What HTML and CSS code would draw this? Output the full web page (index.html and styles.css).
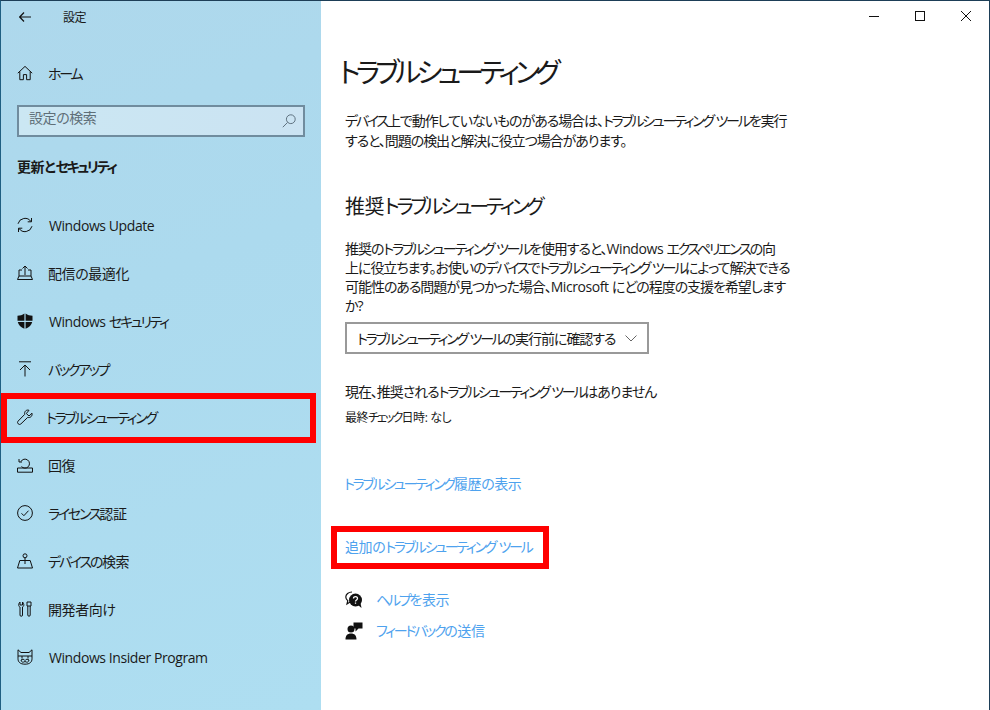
FILE: index.html
```html
<!DOCTYPE html>
<html lang="ja">
<head>
<meta charset="utf-8">
<title>設定</title>
<link rel="stylesheet" href="styles.css">
</head>
<body>
<div class="window">
  <aside class="sidebar">
    <div class="titlebar">
      <svg class="back" width="12" height="10" viewBox="0 0 12 10"><path d="M5 .5.700 5 5 9.500M.7 5H12"/></svg>
      <span class="app-title">設定</span>
    </div>
    <div class="home nav-row">
      <svg class="ico" viewBox="0 0 16 16"><path d="M.8 8.200 8 1.400l7.200 6.800M2.800 6.500v8.200h3.600V9.600h3.200v5.100h3.600V6.500"/></svg>
      <span><b class="k">ホーム</b></span>
    </div>
    <div class="search">
      <span>設定の検索</span>
      <svg width="14" height="14" viewBox="0 0 14 14"><circle cx="8.800" cy="5.200" r="4.400"/><path d="M5.600 8.400.8 13.200"/></svg>
    </div>
    <h2 class="section">更新と<b class="k">セキュリティ</b></h2>
    <nav class="nav">
      <div class="nav-row"><svg class="ico" viewBox="0 0 16 16"><path d="M1 6.800A7.200 7.200 0 0 1 14 4.600M15 9.200A7.200 7.200 0 0 1 2 11.400M14.500 1v3.800h-3.800M1.500 15v-3.800h3.800"/></svg><span class="lat">Windows Update</span></div>
      <div class="nav-row"><svg class="ico" viewBox="0 0 16 16"><path d="M2 11V5h3M11 5h3v6M.5 14.500h15L14 11H2ZM8 10V1M5.500 3.500 8 1l2.500 2.500"/></svg><span>配信の最適化</span></div>
      <div class="nav-row"><svg class="ico solid" viewBox="0 0 16 16"><path d="M7.400.4C5.500 1.800 3 2.600.5 2.700v5.100H7.400ZM8.600.4c1.900 1.400 4.400 2.200 6.900 2.300v5.100H8.600ZM.8 9c.6 3 3 5.300 6.600 6.800V9ZM15.200 9c-.6 3-3 5.300-6.600 6.800V9Z"/></svg><span class="lat">Windows <b class="k">セキュリティ</b></span></div>
      <div class="nav-row"><svg class="ico" viewBox="0 0 16 16"><path d="M2 .8h12M8 15.500V4M3 9l5-5 5 5"/></svg><span><b class="k">バックアップ</b></span></div>
      <div class="nav-row active"><svg class="ico" viewBox="0 0 16 16"><path d="M15 4.200 12 7 9.300 4.500 12 1.300C9.500.3 7 2.500 7.700 5.400L1 12.200A2 2 0 0 0 3.800 15l6.900-6.600c2.800.8 4.900-1.500 4.300-4.200Z"/></svg><span><b class="k">トラブルシューティング</b></span></div>
      <div class="nav-row"><svg class="ico" viewBox="0 0 16 16"><path d="M.5 11v4.200h15V11H.5M4.500 9.500A4.500 4.500 0 1 0 4 4.500M2 2v3h3"/></svg><span>回復</span></div>
      <div class="nav-row"><svg class="ico" viewBox="0 0 16 16"><circle cx="8" cy="8" r="7.400"/><path d="m4.500 8.300 2.400 2.400 4.600-5"/></svg><span><b class="k">ライセンス</b>認証</span></div>
      <div class="nav-row"><svg class="ico" viewBox="0 0 16 16"><circle cx="8" cy="2.800" r="2"/><path d="M8 4.800V11M2.800 7.500h10.400L15.500 15H.5Z"/></svg><span><b class="k">デバイス</b><i class="h">の</i>検索</span></div>
      <div class="nav-row"><svg class="ico" viewBox="0 0 16 16"><path d="M3 1v3h2.500V1C7.500 3 7 5.500 5.500 6v8A1.200 1.200 0 0 1 3 14V6C1.500 5.500 1 3 3 1ZM10 1h4v4h-4ZM10.800 5v9a1.200 1.200 0 0 0 2.400 0V5"/></svg><span>開発者向<i class="h">け</i></span></div>
      <div class="nav-row"><svg class="ico" viewBox="0 0 16 16"><path d="M1 .8 4 3.500h8L15 .8v9c0 3-2 5.400-7 5.400s-7-2.400-7-5.400ZM1 7h14M5 7v2.500M11 7v2.500M4 11c1.500-1 3-1 4 .5 1-1.500 2.500-1.500 4-.5-.3 2.200-2 2.800-4 1.500-2 1.300-3.700.7-4-1.500Z"/></svg><span class="lat">Windows Insider Program</span></div>
    </nav>
    <div class="mark mark-nav"></div>
  </aside>
  <main class="main">
    <div class="caption">
      <svg width="10" height="10" viewBox="0 0 10 10" class="cap-min"><path d="M0 5.500h10"/></svg>
      <svg width="10" height="10" viewBox="0 0 10 10" class="cap-max"><rect x=".5" y=".5" width="9" height="9"/></svg>
      <svg width="10" height="10" viewBox="0 0 10 10" class="cap-close"><path d="M0 0l10 10M10 0 0 10"/></svg>
    </div>
    <h1 class="title"><b class="k">トラブルシューティング</b></h1>
    <p class="intro tight">
      <span class="line"><b class="k">デバイス</b>上で動作していないものがある場合は、<b class="k">トラブルシューティング</b> <b class="k">ツール</b>を実行</span>
      <span class="line">すると、問題の検出と解決に役立つ場合があります。</span>
    </p>
    <h2 class="subtitle">推奨<b class="k">トラブルシューティング</b></h2>
    <p class="desc tight">
      <span class="line">推奨の<b class="k">トラブルシューティング</b> <b class="k">ツール</b>を使用すると、<em class="en">Windows </em><b class="k">エクスペリエンス</b>の向</span>
      <span class="line">上に役立ちます。お使いの<b class="k">デバイス</b>で<b class="k">トラブルシューティング</b> <b class="k">ツール</b>によって解決できる</span>
      <span class="line">可能性のある問題が見つかった場合、<em class="en">Microsoft </em>にどの程度の支援を希望します</span>
      <span class="line">か?</span>
    </p>
    <div class="select tight">
      <span><b class="k">トラブルシューティング</b> <b class="k">ツール</b>の実行前に確認する</span>
      <svg width="12" height="7" viewBox="0 0 12 7"><path d="M.5.500 6 6 11.500.500"/></svg>
    </div>
    <p class="status tight">現在、推奨される<b class="k">トラブルシューティング</b> <b class="k">ツール</b>はありません</p>
    <p class="last">最終<b class="k">チェック</b>日時: なし</p>
    <a class="link history"><b class="k">トラブルシューティング</b>履歴の表示</a>
    <a class="link extra">追加の<b class="k">トラブルシューティング</b> <b class="k">ツール</b></a>
    <div class="help-row help">
      <svg width="18" height="18" viewBox="0 0 18 18"><path class="outline" d="M7 1C3.500 1 .8 3.200.8 6c0 1.500.8 2.800 2 3.700L2 13l3.500-2.200"/><circle cx="10.500" cy="9" r="6.500" class="fill"/><path class="q" d="M8.500 7.500c0-2.500 4-2.500 4 0 0 1.500-2 1.500-2 3M10.500 11.500v1.300"/><path class="fill" d="m13 14 3.500 3-1-5Z"/></svg>
      <a class="link"><b class="k">ヘルプ</b>を表示</a>
    </div>
    <div class="help-row feedback">
      <svg width="18" height="18" viewBox="0 0 18 18"><circle cx="6" cy="7" r="3.500" class="fill"/><path class="fill" d="M.5 17.500c0-4 2-6 5.500-6s5.500 2 5.500 6ZM8.500.5h9v6h-4l-3 3v-3h-2Z"/></svg>
      <a class="link"><b class="k">フィードバック</b>の送信</a>
    </div>
    <div class="mark mark-main"></div>
  </main>
</div>
</body>
</html>
```
FILE: styles.css
```css
* { box-sizing: border-box; }
html, body { margin: 0; height: 100%; }
body {
  width: 990px;
  height: 710px;
  overflow: hidden;
  font-family: "Open Sans", "Noto Sans CJK JP", sans-serif;
  font-size: 14px;
  font-feature-settings: "palt";
  letter-spacing: -0.03em;
  color: #1a1a1a;
  background: #fff;
}
b.k { font-weight: inherit; letter-spacing: -0.16em; }
i.h { font-style: normal; letter-spacing: -0.1em; }
em.en { font-style: normal; letter-spacing: -0.03em; }
.tight { letter-spacing: -0.075em; }
.line { display: block; white-space: nowrap; }
.window {
  position: relative;
  display: flex;
  width: 990px;
  height: 710px;
  border-top: 1px solid #1d3e57;
  border-left: 1px solid #1f5f82;
  border-right: 1px solid #1d3e57;
}
svg { display: block; flex: none; fill: none; stroke: #111; stroke-width: 1; }

.sidebar {
  position: relative;
  width: 320px;
  flex: none;
  background: linear-gradient(160deg, #aed8ec 0%, #acdaee 40%, #aedef1 100%);
}
.titlebar { display: flex; align-items: center; height: 32px; padding-left: 18px; }
.back { stroke-width: 1.2; }
.app-title { margin-left: 32px; font-size: 12px; }
.nav-row { display: flex; align-items: center; height: 48px; padding-left: 16px; }
.nav-row span { margin-left: 15px; white-space: nowrap; }
.nav-row .lat { margin-left: 16px; }
.ico { width: 16px; height: 16px; }
.ico.solid { fill: #111; stroke: none; }
.home { margin-top: 16px; }
.search {
  display: flex;
  align-items: center;
  justify-content: space-between;
  width: 288px;
  height: 32px;
  margin: 8px 0 0 16px;
  padding: 0 7px 0 10px;
  border: 2px solid #708c9e;
  background: linear-gradient(90deg, #cbe7f3, #cbe3f2);
  color: #5f6f78;
}
.search span { margin-bottom: 7px; line-height: 20px; }
.search svg { stroke: #5f7280; }
.section { margin: 0 0 0 16px; height: 52px; padding-top: 20px; font-size: 14px; font-weight: 700; line-height: 20px; }
.nav { margin-top: 12px; }
.active span { margin-left: 13px; }

.mark { position: absolute; border: 6px solid #f00; }
.mark-nav { left: 0; top: 392px; width: 315px; height: 50px; }
.mark-main { left: 10px; top: 525px; width: 218px; height: 43px; }

.main { position: relative; flex: 1; padding-left: 24px; }
.caption { display: flex; align-items: center; justify-content: flex-end; height: 32px; padding-right: 18px; padding-bottom: 2px; }
.cap-min { margin-right: 36px; }
.cap-max { margin-right: 36px; }
.cap-min, .cap-max { shape-rendering: crispEdges; }

.title { margin: 19px 0 0 -6px; font-size: 28px; font-weight: 400; line-height: 40px; }
.title b.k { letter-spacing: -0.17em; }
.intro { margin: 19px 0 0; line-height: 20px; }
.subtitle { margin: 42px 0 0; font-size: 20px; font-weight: 400; line-height: 28px; }
.desc { margin: 18px 0 0; line-height: 19px; }
.select {
  display: flex;
  align-items: center;
  justify-content: space-between;
  width: 304px;
  height: 32px;
  margin-top: 7px;
  padding: 0 10px;
  border: 2px solid #999;
  white-space: nowrap;
}
.select svg { stroke: #666; }
.status { margin: 28px 0 0; line-height: 20px; }
.last { margin: 6px 0 0; font-size: 12px; line-height: 20px; }
.link { display: block; color: #4ea2ee; white-space: nowrap; line-height: 20px; }
.history { margin: 46px 0 0 -1px; }
.extra { margin-top: 43px; }
.help-row { display: flex; align-items: center; height: 20px; }
.help-row .link { margin-left: 13px; }
.help { margin-top: 33px; }
.feedback { margin-top: 11px; }
.fill { fill: #111; stroke: none; }
.outline { stroke: #111; stroke-width: 1.2; }
.q { stroke: #fff; stroke-width: 1.3; }
```
